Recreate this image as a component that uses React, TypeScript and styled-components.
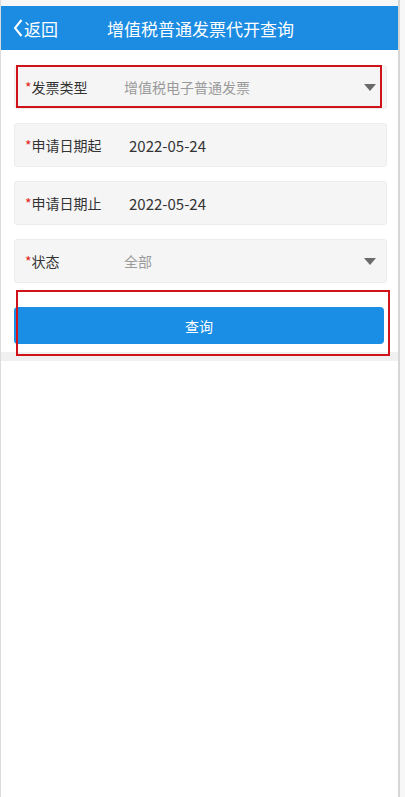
import React from "react";
import styled, { createGlobalStyle } from "styled-components";

const GlobalStyle = createGlobalStyle`
  html, body {
    margin: 0;
    padding: 0;
    background: #f7f7f7;
    font-family: "Noto Sans CJK SC", "Liberation Sans", sans-serif;
  }
`;

const Page = styled.div`
  position: relative;
  width: 400px;
  min-height: 797px;
  background: #fff;
  border-left: 1px solid #dcdcdc;
  border-right: 2px solid #d6d6d6;
  box-sizing: border-box;
  padding-top: 6px;
  background-clip: padding-box;
`;

const TopStrip = styled.div`
  position: absolute;
  top: 0;
  left: 0;
  right: 0;
  height: 6px;
  background: #f7f7f7;
`;

const Header = styled.div`
  position: relative;
  display: flex;
  align-items: center;
  justify-content: center;
  height: 44px;
  background: #1c8ce3;
  color: #fff;
`;

const Back = styled.div`
  position: absolute;
  left: 12px;
  top: 0;
  bottom: 0;
  display: flex;
  align-items: center;
  gap: 1px;
  font-size: 17px;
`;

const Title = styled.h1`
  margin: 0 0 0 2px;
  font-size: 17px;
  font-weight: 400;
`;

const Form = styled.div`
  display: flex;
  flex-direction: column;
  gap: 14px;
  padding: 15px 11px 8px 13px;
  border-bottom: 9px solid #f0f0f0;
`;

const Field = styled.div`
  display: flex;
  align-items: center;
  box-sizing: border-box;
  height: 44px;
  padding: 0 10px;
  background: #f5f5f5;
  border: 1px solid #ececec;
  border-radius: 3px;
  font-size: 14px;
`;

const Label = styled.div`
  width: 99px;
  color: #333;
  flex-shrink: 0;
`;

const Star = styled.span`
  color: #e2231a;
`;

const Value = styled.div<{ $placeholder?: boolean; $shift?: number }>`
  flex: 1;
  color: ${(p) => (p.$placeholder ? "#9a9a9a" : "#333")};
  font-size: ${(p) => (p.$placeholder ? "14px" : "15px")};
  padding-left: ${(p) => p.$shift ?? 0}px;
  font-family: "Noto Sans CJK SC", "Open Sans", sans-serif;
`;

const Arrow = styled.div`
  width: 0;
  height: 0;
  border-left: 6px solid transparent;
  border-right: 6px solid transparent;
  border-top: 7px solid #6a6a6a;
`;

const QueryButton = styled.button`
  margin-top: 10px;
  width: 370px;
  height: 37px;
  border: none;
  border-radius: 4px;
  background: #1a8de4;
  color: #fff;
  font-size: 14px;
  font-family: "Noto Sans CJK SC", "Liberation Sans", sans-serif;
`;

const Mark = styled.div<{ $top: number; $left: number; $w: number; $h: number }>`
  position: absolute;
  top: ${(p) => p.$top}px;
  left: ${(p) => p.$left}px;
  width: ${(p) => p.$w}px;
  height: ${(p) => p.$h}px;
  border: 2px solid #d0121b;
  box-sizing: border-box;
  pointer-events: none;
`;

const Chevron = () => (
  <svg width="10" height="20" viewBox="0 0 10 20">
    <path d="M8.5 2 L2 10 L8.5 18" fill="none" stroke="#fff" strokeWidth="2" />
  </svg>
);

export default function App() {
  return (
    <>
      <GlobalStyle />
      <Page>
        <TopStrip />
        <Header>
          <Back>
            <Chevron />
            <span>返回</span>
          </Back>
          <Title>增值税普通发票代开查询</Title>
        </Header>
        <Form>
          <Field>
            <Label>
              <Star>*</Star>发票类型
            </Label>
            <Value $placeholder>增值税电子普通发票</Value>
            <Arrow />
          </Field>
          <Field>
            <Label>
              <Star>*</Star>申请日期起
            </Label>
            <Value $shift={5}>2022-05-24</Value>
          </Field>
          <Field>
            <Label>
              <Star>*</Star>申请日期止
            </Label>
            <Value $shift={5}>2022-05-24</Value>
          </Field>
          <Field>
            <Label>
              <Star>*</Star>状态
            </Label>
            <Value $placeholder>全部</Value>
            <Arrow />
          </Field>
          <QueryButton>查询</QueryButton>
        </Form>
        <Mark $top={65} $left={15} $w={366} $h={43} />
        <Mark $top={290} $left={15} $w={374} $h={66} />
      </Page>
    </>
  );
}
